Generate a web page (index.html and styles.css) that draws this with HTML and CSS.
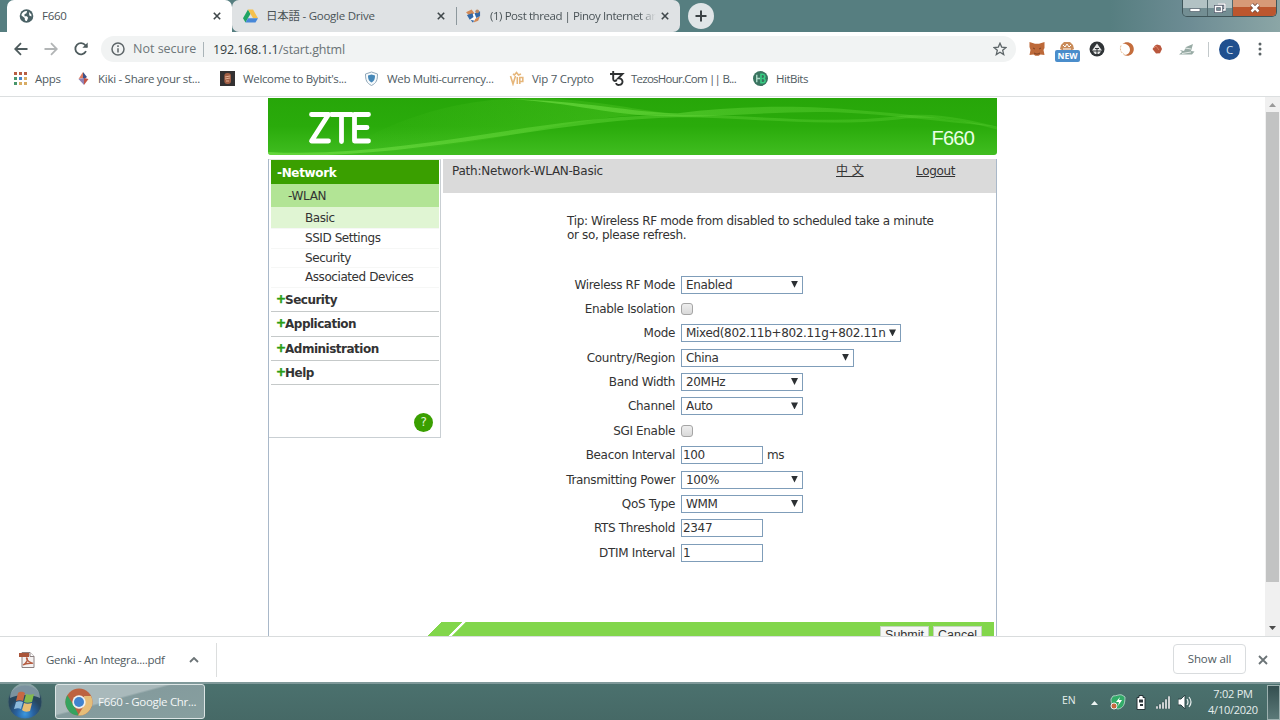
FILE: index.html
```html
<!DOCTYPE html>
<html lang="en">

<head>
    <meta charset="UTF-8">
    <meta name="viewport" content="width=device-width, initial-scale=1.0">
    <title>F660</title>
    <link rel="stylesheet" href="styles.css">
</head>

<body>
    <!-- tabs -->
    <header class="tabstrip">
        <div class="tab active">
            <svg class="favicon" viewBox="0 0 14 14"><circle cx="7" cy="7" r="6.8" fill="#4b6266"/><path d="M2 5.5C3 3 5 1.8 7.6 2L7 4.2 5 5.2v2h2.4l1.2 1.6-1.2 3.2C5 12 5.4 10 5.2 9L2 6.5zM9.5 3l2.4 2.4v2.2L9.8 6.4z" fill="#fff"/></svg>
            <span class="tab-title">F660</span>
            <svg class="close" viewBox="0 0 8 8"><path d="M.8.8l6.4 6.4M7.2.8L.8 7.2"/></svg>
        </div>
        <div class="tab drive">
            <svg class="favicon" viewBox="0 0 16 14"><path d="M5.3 0L0 9.3 2.7 14 8 4.7z" fill="#1fa463"/><path d="M5.3 0h5.4L16 9.3h-5.3z" fill="#f5c04c"/><path d="M5.3 9.3H16L13.3 14H2.7z" fill="#4687d8"/></svg>
            <span class="tab-title">日本語 - Google Drive</span>
            <svg class="close" viewBox="0 0 8 8"><path d="M.8.8l6.4 6.4M7.2.8L.8 7.2"/></svg>
        </div>
        <div class="tab forum">
            <svg class="favicon" viewBox="0 0 16 14"><circle cx="8" cy="8" r="4.5" fill="#fff"/><path d="M0 3l6-3 3 4-5 3zM10 10l5-3-2 5-5 2z" fill="#d18a58"/><path d="M1 6l6-2 1 4-4 3zM9 4l6-2v5l-4 2zM5 11l4 1-2 2z" fill="#3469a7"/><circle cx="12" cy="2" r="2" fill="#ba8964"/></svg>
            <span class="tab-title fade">(1) Post thread | Pinoy Internet ar</span>
            <svg class="close" viewBox="0 0 8 8"><path d="M.8.8l6.4 6.4M7.2.8L.8 7.2"/></svg>
        </div>
        <button class="new-tab"><svg viewBox="0 0 12 12"><path d="M6 .5v11M.5 6h11"/></svg></button>
        <div class="window-buttons">
            <button><svg viewBox="0 0 12 10"><path d="M1 5.5h10v3H1z" fill="#fff" stroke="#53606c" stroke-width=".7"/></svg></button>
            <button class="restore"><svg viewBox="0 0 12 10"><path d="M4 1h7v6H9M1.5 3.5h6v5h-6z" fill="none" stroke="#535a6b" stroke-width="3"/><path d="M4 1h7v6H9M1.5 3.5h6v5h-6z" fill="none" stroke="#fff" stroke-width="1.5"/></svg></button>
            <button class="quit"><svg viewBox="0 0 12 10"><path d="M2.5 1.5l7 7M9.5 1.5l-7 7" stroke="#6e4438" stroke-width="4"/><path d="M2.5 1.5l7 7M9.5 1.5l-7 7" stroke="#fff" stroke-width="2.5"/></svg></button>
        </div>
    </header>

    <!-- address bar -->
    <div class="toolbar">
        <svg class="nav-icon" viewBox="0 0 14 14"><path d="M13.5 7H1.5M7 1.2L1.2 7 7 12.8"/></svg>
        <svg class="nav-icon forward" viewBox="0 0 14 14"><path d="M.5 7h12M7 1.2L12.8 7 7 12.8"/></svg>
        <svg class="nav-icon" viewBox="0 0 14 14"><path d="M12 9.2A5.6 5.6 0 1 1 11.4 3.3L13 5"/><path d="M13.7.5v5.3H8.4z" fill="#4e5b5d" stroke="none"/></svg>
        <div class="address">
            <svg class="info" viewBox="0 0 14 14"><circle cx="7" cy="7" r="6"/><path d="M7 6.2v4.3M7 3.3v1.6"/></svg>
            <span class="insecure">Not secure</span>
            <span class="url">192.168.1.1<i>/start.ghtml</i></span>
            <svg class="star" viewBox="0 0 14 14"><path d="M7 1.2l1.7 3.9 4.2.4-3.2 2.8 1 4.2L7 10.2l-3.7 2.3 1-4.2L1.1 5.5l4.2-.4z"/></svg>
        </div>
        <div class="extensions">
            <svg viewBox="0 0 16 16"><path d="M.5 1L6 2.8h4L15.500 1v6l-1 2 1 5-4-.6-1.800 1.400H6.400L4.500 13.400.5 14l1-5-1-3z" fill="#bd6939"/><path d="M4 7l2 1M12 7l-2 1M5 12l2 1h2l2-1" stroke="#7d4123" fill="none"/></svg>
            <span class="new-ext"><svg viewBox="0 0 16 10"><path d="M1 8l1-4 3-3h6l3 3 1 4-4 2H5z" fill="#c98b59"/><path d="M4 4l2 2 2-3 2 3 2-2M4 8h8" stroke="#fff" fill="none"/></svg><b>NEW</b></span>
            <svg viewBox="0 0 16 16"><circle cx="8" cy="8" r="7.500" fill="#303437"/><path d="M8 2.500l2.800 4L13 9.500H3l2.200-3zM4 10.500h8l-2 2.500H6z" fill="#e4e5e5"/><path d="M6 7.500h4M8 8v5" stroke="#303437"/></svg>
            <svg viewBox="0 0 16 16"><path d="M3.5 2.8C7.5-.8 14.8 1.7 14.8 8c0 5.4-5.2 8.3-10 6 3 .2 6-1.4 6.2-5.2.1-4-3.600-6.600-7.500-6z" fill="#c46d3c"/><path d="M2 4.500C.2 9 2.500 13 7 14" stroke="#e5ba91" fill="none" stroke-dasharray="2 1"/></svg>
            <svg viewBox="0 0 16 16"><path d="M3.500 8L6 4.500l2-.9 3.500 1L13 8l-2 4.200-4 .3z" fill="#b9573d"/><path d="M5 7l2-2 3 4" stroke="#dc8063" fill="none"/></svg>
            <svg viewBox="0 0 16 16"><path d="M0 13.500l3-2.500-2-2 4 1 2-4 7-3-2 7 3.500.5-2.500 3z" fill="#98aba5"/><path d="M6 7l6 1M3 12.500l9-1.500" stroke="#e5ebe8"/></svg>
        </div>
        <span class="divider"></span>
        <span class="avatar">C</span>
        <svg class="menu" viewBox="0 0 4 14"><circle cx="2" cy="2" r="1.5"/><circle cx="2" cy="7" r="1.5"/><circle cx="2" cy="12" r="1.5"/></svg>
    </div>

    <!-- bookmarks -->
    <nav class="bookmarks">
        <a class="apps"><svg viewBox="0 0 13 13"><g fill="#b85e43"><path d="M0 0h3v3H0zM5 0h3v3H5zM10 0h3v3h-3z"/></g><path d="M0 5h3v3H0zM0 10h3v3H0z" fill="#48966b"/><path d="M5 5h3v3H5z" fill="#4583ca"/><path d="M10 5h3v3h-3zM5 10h3v3H5zM10 10h3v3h-3z" fill="#d8ac64"/></svg><span>Apps</span></a>
        <a class="kiki"><svg viewBox="0 0 13 15"><path d="M6 1v6L1.500 8z" fill="#df7b5f"/><path d="M6 1l4 5-4 3z" fill="#3d4f86"/><path d="M1.500 8L7 7v7z" fill="#8f82b4"/><path d="M7 7l4.500 1L7 14z" fill="#c25346"/></svg><span>Kiki - Share your st...</span></a>
        <a class="bybit"><svg viewBox="0 0 15 15"><path d="M0 0h15v15H0z" fill="#343132"/><rect x="4.3" y="2" width="6.7" height="11" rx="3" fill="#a25f45"/><path d="M5 6l5-1M5 8l5-1M6 10h3" stroke="#e4b095"/></svg><span>Welcome to Bybit's...</span></a>
        <a class="web"><svg viewBox="0 0 15 15"><path d="M7.5 1l6 2c0 6-1 9-6 11.5C2.500 12 1.500 9 1.500 3z" fill="#f6fafc" stroke="#91a7b8"/><path d="M7.500 3.500l3.500 1c0 4-1 5.500-3.500 7C5 10 4 8.500 4 4.500z" fill="#4688b8"/></svg><span>Web Multi-currency...</span></a>
        <a class="vip"><svg viewBox="0 0 15 15"><path d="M1.500 5l2.500 8L6.500 5M8.300 6v7M10.800 13V6.500h3v4h-3M4 3l1.500 1L7.500 1.500l2 2.500L12 3" fill="none" stroke="#e6b67a" stroke-width="1.600"/></svg><span>Vip 7 Crypto</span></a>
        <a class="tezos"><svg viewBox="0 0 15 15"><path d="M0 3h6M3.200 0v8c0 2.500 3 2.500 3.400.5M5.500 3h7L8.200 7.400c5-.8 6 6 1 6.500-2 .2-3-.8-3-2" fill="none" stroke="#2f3233" stroke-width="1.900"/></svg><span>TezosHour.Com || B...</span></a>
        <a class="hitbits"><svg viewBox="0 0 16 16"><circle cx="8" cy="8" r="8" fill="#3a7460"/><path d="M4 4v8M4 8h3.500" stroke="#aedbc8" stroke-width="1.500"/><path d="M8.500 3.500v9h2c3.200 0 3-4 .8-4.500 2-.8 1.700-4.500-1-4.500z" fill="none" stroke="#37cf83" stroke-width="1.700"/></svg><span>HitBits</span></a>
    </nav>

    <!-- router page -->
    <div class="viewport">
        <div class="router">
            <div class="banner">
                <svg class="waves" viewBox="0 0 729 56" preserveAspectRatio="none">
                    <defs>
                        <linearGradient id="band" x1="0" x2="1" y1="0" y2="0">
                            <stop offset="0" stop-color="#7be64d" stop-opacity=".6"/>
                            <stop offset=".5" stop-color="#65d73b" stop-opacity=".42"/>
                            <stop offset="1" stop-color="#65d73b" stop-opacity=".25"/>
                        </linearGradient>
                        <linearGradient id="glow" x1="0" x2="1" y1="0" y2="0">
                            <stop offset="0" stop-color="#57cc2a" stop-opacity="0"/>
                            <stop offset="1" stop-color="#57cc2a" stop-opacity=".4"/>
                        </linearGradient>
                    </defs>
                    <path d="M70 55C150 5 220 0 270 0c60 2 100 12 145 17-65-6-140 15-205 25-60 9-90 11-140 13z" fill="url(#glow)"/>
                    <path d="M0 53C130 60 260 20 390 17c100-2 160 10 240 1 40-5 70 4 99 10v3c-40-10-60-14-99-10-80 8-150-2-220-2C290 21 140 62 0 56z" fill="url(#band)"/>
                    <path d="M240 1c80 2 120 13 170 14 60-8 130-8 180-3 50 4 90 8 139 16-60-5-110-12-160-14-60-2-120 6-170 4C340 17 310 5 240 1z" fill="url(#band)"/>
                </svg>
                <svg class="logo" viewBox="0 0 62 32" role="img" aria-label="ZTE"><path d="M3 2.500h17L3 29h17M23 2.500h20M33 2.500v27M60 2.500H46V29h14M46 15.500h12.500"/></svg>
                <span class="model">F660</span>
            </div>
            <div class="main">
                <aside class="sidebar">
                    <a class="item open">-Network</a>
                    <a class="item sub">-WLAN</a>
                    <a class="item leaf current">Basic</a>
                    <a class="item leaf">SSID Settings</a>
                    <a class="item leaf">Security</a>
                    <a class="item leaf">Associated Devices</a>
                    <a class="item group"><b>+</b>Security</a>
                    <a class="item group"><b>+</b>Application</a>
                    <a class="item group"><b>+</b>Administration</a>
                    <a class="item group"><b>+</b>Help</a>
                    <a class="help">?</a>
                </aside>
                <section class="content">
                    <div class="path">
                        <span>Path:Network-WLAN-Basic</span>
                        <a class="lang">中 文</a>
                        <a class="logout">Logout</a>
                    </div>
                    <p class="tip">Tip: Wireless RF mode from disabled to scheduled take a minute<br>or so, please refresh.</p>
                    <form class="settings">
                        <label>Wireless RF Mode</label>
                        <div class="select"><select><option>Enabled</option></select><i></i></div>
                        <label>Enable Isolation</label>
                        <div><input class="check" type="checkbox"></div>
                        <label>Mode</label>
                        <div class="select wide"><select><option>Mixed(802.11b+802.11g+802.11n</option></select><i></i></div>
                        <label>Country/Region</label>
                        <div class="select medium"><select><option>China</option></select><i></i></div>
                        <label>Band Width</label>
                        <div class="select"><select><option>20MHz</option></select><i></i></div>
                        <label>Channel</label>
                        <div class="select"><select><option>Auto</option></select><i></i></div>
                        <label>SGI Enable</label>
                        <div><input class="check" type="checkbox"></div>
                        <label>Beacon Interval</label>
                        <div><input class="field" type="text" value="100"><span class="unit">ms</span></div>
                        <label>Transmitting Power</label>
                        <div class="select"><select><option>100%</option></select><i></i></div>
                        <label>QoS Type</label>
                        <div class="select"><select><option>WMM</option></select><i></i></div>
                        <label>RTS Threshold</label>
                        <div><input class="field" type="text" value="2347"></div>
                        <label>DTIM Interval</label>
                        <div><input class="field" type="text" value="1"></div>
                    </form>
                    <div class="actions">
                        <button>Submit</button>
                        <button>Cancel</button>
                    </div>
                </section>
            </div>
        </div>
        <div class="scrollbar">
            <i class="up"></i>
            <div class="thumb"></div>
            <i class="down"></i>
        </div>
    </div>

    <!-- downloads -->
    <div class="downloads">
        <div class="file">
            <svg class="pdf" viewBox="0 0 16 16"><path d="M3 .5h8l4 4v11H3z" fill="#f4f2f2" stroke="#8c8080"/><path d="M11 .5v4h4" fill="#fff" stroke="#8c8080"/><path d="M0 1h10v4H0z" fill="#aa553a"/><path d="M4 13c4-2 5-6 4-7s-1 3 5 5c3 1-5-1-9 2z" fill="none" stroke="#b65c41" stroke-width="1.300"/></svg>
            <span>Genki - An Integra....pdf</span>
            <svg class="chevron" viewBox="0 0 10 6"><path d="M1 5l4-4 4 4"/></svg>
        </div>
        <button class="show-all">Show all</button>
        <svg class="dismiss" viewBox="0 0 10 10"><path d="M1 1l8 8M9 1L1 9"/></svg>
    </div>

    <!-- taskbar -->
    <footer class="taskbar">
        <div class="start">
            <svg viewBox="0 0 36 36">
                <defs><radialGradient id="orb" cx=".5" cy=".85"><stop offset="0" stop-color="#3b98df"/><stop offset=".5" stop-color="#2862a1"/><stop offset="1" stop-color="#27465e"/></radialGradient></defs>
                <circle cx="18" cy="18" r="17" fill="url(#orb)" stroke="#48696d"/>
                <path d="M3 14A15 15 0 0 1 33 14c-8-4-22-4-30 0z" fill="#c1d2d5" opacity=".55"/>
                <path d="M11 9c3-2 5-1 7 0l-2 8c-2-1-5-1-7 0z" fill="#c76844"/><path d="M19 10c2 1 5 1 8 0l-2 8c-3 1-6 1-8 0z" fill="#82b94f"/>
                <path d="M9 18c2-1 5-1 7 0l-2 7c-2-1-4-1-7 0z" fill="#8cbadd"/><path d="M17 19c2 1 5 1 8 0l-2 8c-3 1-6 1-8-1z" fill="#e8bd72"/>
            </svg>
        </div>
        <div class="task">
            <svg viewBox="0 0 28 28"><circle cx="14" cy="14" r="13.500" fill="#bd6341"/><path d="M2.300 7.200L9 18l5 9.500A13.500 13.500 0 0 1 2.300 7.200z" fill="#35a35f"/><path d="M13 27.500L20 16l-1-8h7A13.500 13.500 0 0 1 13 27.500z" fill="#e6bd78"/><circle cx="14" cy="14" r="6.700" fill="#edf0ef"/><circle cx="14" cy="14" r="5" fill="#4083cf"/></svg>
            <span>F660 - Google Chr...</span>
        </div>
        <div class="tray">
            <span class="kb">EN</span>
            <i class="tray-arrow"></i>
            <svg class="shield" viewBox="0 0 16 16"><path d="M3 2c4 0 6-2 9-1l3 2c0 8-2 11-7 12C3 14 1 10 1 5z" fill="#32ac68" stroke="#a8cec0"/><path d="M10 3L6 8h3l-1 4 4-6H9z" fill="#fff"/><circle cx="4" cy="12" r="3" fill="#c6683e" stroke="#eee"/></svg>
            <svg class="battery" viewBox="0 0 10 15"><path d="M3 .5h4v2h2v12H1v-12h2z" fill="#fff" stroke="#283539"/><path d="M3 4.500h4v3H3zM4 9h3v2H4z" fill="#2c3539"/></svg>
            <svg class="signal" viewBox="0 0 15 13"><path d="M0 13v-3h2v3zM3 13V8h2v5zM6 13V6h2v7zM9 13V3h2v10zM12 13V0h2v13z" fill="#fff" stroke="#354b4e" stroke-width=".5"/></svg>
            <svg class="volume" viewBox="0 0 15 14"><path d="M0 4h3l4-4v14l-4-4H0z" fill="#fff" stroke="#314749"/><path d="M9 4q2 3 0 6M11 2q4 5 0 10" fill="none" stroke="#e9efef" stroke-width="1.200"/></svg>
            <div class="clock"><span>7:02 PM</span><span>4/10/2020</span></div>
            <div class="peek"></div>
        </div>
    </footer>
</body>

</html>
```
FILE: styles.css
```css
:root {
    --teal: #567e80;
    --ui: "Open Sans", "Noto Sans", "Noto Sans CJK JP", sans-serif;
    --page: "DejaVu Sans", "Noto Sans CJK SC", sans-serif;
    --green: #3a9f00;
    --line: #a9b8c9;
}

* {
    box-sizing: border-box;
}

body {
    margin: 0;
    width: 1280px;
    height: 720px;
    overflow: hidden;
    display: flex;
    flex-direction: column;
    background: #fff;
    font-family: var(--ui);
    font-size: 11.5px;
    color: #505b5f;
}

svg {
    display: block;
    flex: none;
}

button {
    font-family: inherit;
    padding: 0;
}

/* tabs */
.tabstrip {
    height: 32px;
    flex: none;
    display: flex;
    padding-left: 7px;
    background: linear-gradient(90deg, var(--teal) 0, var(--teal) 1110px, #6d8c94 1190px, #8ba6a6 100%);
}

.tab {
    display: flex;
    align-items: center;
    height: 32px;
    background: #dfe2e4;
    color: #4a5357;
}

.tab.active {
    width: 225px;
    padding: 0 11px 0 12px;
    background: #fff;
    border-radius: 7px 7px 0 0;
}

.tab.drive {
    width: 224px;
    padding: 0 11px 0 11px;
    border-radius: 7px 0 0 7px;
}

.tab.forum {
    width: 224px;
    padding: 0 11px 0 10px;
    border-radius: 0 7px 7px 0;
    position: relative;
}

.tab.forum::before {
    content: "";
    position: absolute;
    left: 0;
    top: 7px;
    width: 1px;
    height: 18px;
    background: #8d989d;
}

.favicon {
    width: 15px;
    height: 14px;
    margin-right: 8px;
}

.tab-title {
    flex: 1;
    padding-bottom: 2px;
    white-space: nowrap;
    overflow: hidden;
    letter-spacing: -.25px;
}

.tab-title.fade {
    letter-spacing: -.43px;
    margin-left: 1px;
    -webkit-mask-image: linear-gradient(90deg, #000 90%, transparent);
    mask-image: linear-gradient(90deg, #000 90%, transparent);
}

.close {
    width: 8px;
    height: 8px;
    margin-left: 5px;
    stroke: #3f474a;
    stroke-width: 1.6;
}

.new-tab {
    width: 26px;
    height: 26px;
    margin: 3px 0 0 8px;
    border: 0;
    border-radius: 50%;
    background: #e0e5e7;
    display: grid;
    place-items: center;
}

.new-tab svg {
    width: 12px;
    stroke: #3b4245;
    stroke-width: 2;
}

.window-buttons {
    display: flex;
    height: 17px;
    margin: 0 3px 0 auto;
    border: 1px solid #3f5559;
    border-top: 0;
    border-radius: 0 0 5px 5px;
    overflow: hidden;
}

.window-buttons button {
    width: 25px;
    border: 0;
    border-right: 1px solid #51676c;
    background: linear-gradient(#b2c2c4 50%, #738e93 50%);
    display: grid;
    place-items: center;
}

.window-buttons button.quit {
    width: 43px;
    border-right: 0;
    background: linear-gradient(#d79a78 45%, #bc562e 45%);
}

.window-buttons svg {
    width: 12px;
    height: 10px;
}

/* address bar */
.toolbar {
    height: 34px;
    flex: none;
    display: flex;
    align-items: center;
    padding: 0 18px 0 14px;
}

.nav-icon {
    width: 14px;
    height: 14px;
    margin-right: 16px;
    fill: none;
    stroke: #4e5b5d;
    stroke-width: 1.8;
}

.nav-icon.forward {
    stroke: #b2b5b6;
}

.address {
    flex: none;
    width: 915px;
    height: 26px;
    margin-left: -3px;
    padding: 0 9px 0 10px;
    display: flex;
    align-items: center;
    border-radius: 13px;
    background: #f1f3f3;
    font-size: 12.5px;
}

.info {
    width: 14px;
    margin-right: 8px;
    fill: none;
    stroke: #5e6669;
    stroke-width: 1.5;
}

.insecure {
    width: 71px;
    height: 15px;
    line-height: 14px;
    border-right: 1px solid #aab4b8;
    color: #6d7679;
    white-space: nowrap;
}

.url {
    flex: 1;
    margin-left: 9px;
    color: #333d40;
    letter-spacing: -.15px;
}

.url i {
    font-style: normal;
    color: #697275;
}

.star {
    width: 14px;
    fill: none;
    stroke: #5d6568;
    stroke-width: 1.3;
}

.extensions {
    display: flex;
    gap: 14px;
    margin-left: 13px;
}

.extensions > svg {
    width: 16px;
    height: 16px;
}

.new-ext {
    width: 16px;
    height: 16px;
    position: relative;
}

.new-ext svg {
    width: 16px;
    height: 10px;
}

.new-ext b {
    position: absolute;
    left: -4px;
    top: 9px;
    width: 25px;
    height: 12px;
    border-radius: 2px;
    background: #4a8dcb;
    color: #fff;
    font: bold 8.5px/12px "Open Sans", sans-serif;
    text-align: center;
}

.divider {
    width: 1px;
    height: 15px;
    margin-left: auto;
    background: #c3c9cb;
}

.avatar {
    width: 21px;
    height: 21px;
    margin-left: 10px;
    border-radius: 50%;
    background: #20508f;
    color: #d5e1ef;
    line-height: 21px;
    text-align: center;
}

.menu {
    width: 4px;
    height: 14px;
    margin-left: 18px;
    fill: #5a6265;
}

/* bookmarks */
.bookmarks {
    height: 31px;
    flex: none;
    padding: 0 0 6px 14px;
    display: flex;
    align-items: center;
    border-bottom: 1px solid #dcdfe0;
}

.bookmarks a {
    display: flex;
    align-items: center;
    white-space: nowrap;
    letter-spacing: -.28px;
}

.bookmarks svg {
    width: 15px;
    height: 15px;
    margin-right: 8px;
}

.bookmarks .apps {
    width: 63px;
}

.bookmarks .apps svg {
    width: 13px;
    height: 13px;
}

.bookmarks .kiki {
    width: 143px;
}

.bookmarks .kiki svg {
    width: 13px;
}

.bookmarks .bybit {
    width: 144px;
    letter-spacing: -.35px;
}

.bookmarks .web {
    width: 145px;
    letter-spacing: -.35px;
}

.bookmarks .vip {
    width: 101px;
}

.bookmarks .tezos {
    width: 143px;
    letter-spacing: -.75px;
}

.bookmarks .tezos svg {
    margin-right: 6px;
}

.bookmarks .hitbits {
    letter-spacing: -.5px;
}

/* page area */
.viewport {
    height: 540px;
    flex: none;
    display: flex;
    overflow: hidden;
    border-bottom: 1px solid #d9dcdd;
    font-family: var(--page);
    font-size: 12px;
    letter-spacing: -.33px;
    color: #333;
}

.router {
    width: 729px;
    margin-left: 268px;
    padding-top: 1px;
    flex: none;
    height: 600px;
}

.banner {
    height: 57px;
    display: grid;
    border-radius: 0 0 3px 3px;
    background: linear-gradient(#27a609, #2aab0b 50%, #40bd20);
    overflow: hidden;
}

.banner > * {
    grid-area: 1 / 1;
}

.waves {
    width: 729px;
    height: 57px;
}

.logo {
    width: 63px;
    height: 32px;
    margin: 14px 0 0 40px;
    fill: none;
    stroke: #fff;
    stroke-width: 4.8;
    stroke-linecap: round;
    stroke-linejoin: round;
}

.model {
    justify-self: end;
    margin: 29px 23px 0 0;
    color: #e9ffe5;
    font: 20px/23px "Liberation Sans", sans-serif;
    letter-spacing: -.8px;
}

.main {
    height: 535px;
    margin-top: 4px;
    display: flex;
    align-items: flex-start;
    border: 1px solid var(--line);
    border-top: 0;
}

.sidebar {
    width: 172px;
    height: 279px;
    padding: 0 1px 0 2px;
    flex: none;
    border: 1px solid #c9cfd3;
    border-left: 0;
    border-top-color: #e3e7e3;
    display: flex;
    flex-direction: column;
}

.item {
    display: block;
    flex: none;
    height: 19.6px;
    line-height: 19px;
    white-space: nowrap;
}

.item.open {
    height: 24px;
    line-height: 26px;
    padding-left: 6px;
    background: var(--green);
    color: #fff;
    font-weight: bold;
}

.item.sub {
    height: 23px;
    line-height: 25px;
    padding-left: 17px;
    background: #b2e495;
}

.item.leaf {
    padding-left: 34px;
    letter-spacing: -.43px;
    border-bottom: 1px solid #f6f7f6;
}

.item.leaf.current {
    height: 22px;
    line-height: 23px;
    background: #e0f5d3;
}

.item.group {
    height: 24.4px;
    line-height: 25px;
    padding-left: 5px;
    border-bottom: 1px solid #c5c9c9;
    font-weight: bold;
    letter-spacing: -.5px;
}

.item.group b {
    display: inline-block;
    width: 9px;
    line-height: 20px;
    vertical-align: 1px;
    color: #2c9d15;
    -webkit-text-stroke: .5px #2c9d15;
}

.help {
    width: 19px;
    height: 19px;
    margin: 28px 6px 0 auto;
    border-radius: 50%;
    background: var(--green);
    color: #e0f5d3;
    line-height: 19px;
    text-align: center;
}

.content {
    width: 553px;
    margin-left: 2px;
    flex: none;
}

.path {
    height: 34px;
    padding: 5px 0 0 9px;
    display: flex;
    background: #dadada;
    line-height: 15px;
}

.path span {
    width: 384px;
    letter-spacing: -.22px;
}

.path a {
    text-decoration: underline;
    height: 15px;
}

.path .lang {
    width: 80px;
    letter-spacing: 0;
}

.tip {
    margin: 21px 0 30.5px 124px;
    line-height: 14px;
    white-space: nowrap;
}

.settings {
    margin: 0;
    display: grid;
    grid-template-columns: 232px 1fr;
    column-gap: 6px;
    grid-auto-rows: 24.36px;
    align-items: center;
}

.settings label {
    text-align: right;
}

.settings > div {
    display: flex;
    align-items: center;
}

.settings .select {
    display: grid;
    width: 122px;
    height: 18px;
    align-items: center;
}

.settings .select.wide {
    width: 220px;
}

.settings .select.medium {
    width: 173px;
}

.select > * {
    grid-area: 1 / 1;
}

.select select {
    appearance: none;
    width: 100%;
    height: 18px;
    padding: 0 4px;
    border: 1px solid #7f9db9;
    border-radius: 0;
    background: #fff;
    font: inherit;
    letter-spacing: inherit;
    color: inherit;
}

.select i {
    width: 7px;
    height: 7px;
    margin: 0 5px 1px auto;
    background: #2c3033;
    clip-path: polygon(0 0, 100% 0, 50% 100%);
}

.check {
    appearance: none;
    width: 12px;
    height: 12px;
    margin: 0;
    border: 1px solid #a5a5a5;
    border-radius: 3px;
    background: linear-gradient(#eee, #d9d9d9);
}

.field {
    width: 82px;
    height: 18px;
    padding: 0 1px;
    border: 1px solid #7f9db9;
    font: inherit;
    letter-spacing: inherit;
    color: inherit;
}

.unit {
    margin-left: 4px;
}

.actions {
    height: 22px;
    margin: 57px 2px 0 -15px;
    padding: 4px 12px 0 0;
    display: flex;
    justify-content: flex-end;
    gap: 4px;
    background: linear-gradient(135deg, transparent 9.2px, #82d64b 9.8px, #82d64b 24px, #fff 24.5px, #fff 26.5px, #82d64b 27px);
}

.actions button {
    height: 19px;
    width: 49px;
    border: 1px solid #c5d3c0;
    background: #f5f6f5;
    font: 12.5px/14px "Liberation Sans", sans-serif;
    color: #333;
}

.scrollbar {
    width: 15px;
    margin-left: auto;
    display: flex;
    flex-direction: column;
    align-items: center;
    background: #f0f0f0;
}

.scrollbar .up,
.scrollbar .down {
    width: 7px;
    height: 4px;
    margin: 6px 0 5px;
    background: #999;
    clip-path: polygon(50% 0, 100% 100%, 0 100%);
}

.scrollbar .down {
    margin: auto 0 6px;
    background: #4c4c4c;
    clip-path: polygon(0 0, 100% 0, 50% 100%);
}

.thumb {
    width: 13px;
    height: 470px;
    background: #c2c3c3;
}

/* downloads */
.downloads {
    height: 45px;
    flex: none;
    display: flex;
    align-items: center;
    padding-right: 12px;
}

.file {
    width: 217px;
    height: 34px;
    padding: 0 17px 0 19px;
    display: flex;
    align-items: center;
    border-right: 1px solid #dcdede;
    letter-spacing: -.3px;
}

.pdf {
    width: 16px;
    height: 16px;
    margin-right: 11px;
}

.chevron {
    width: 10px;
    margin-left: auto;
    fill: none;
    stroke: #6b7376;
    stroke-width: 1.8;
}

.show-all {
    width: 73px;
    height: 30px;
    margin: -2px 0 0 auto;
    border: 1px solid #d9dcde;
    border-radius: 4px;
    background: #fff;
    color: #505b5f;
    font-size: 11.5px;
    letter-spacing: -.1px;
}

.dismiss {
    width: 10px;
    margin-left: 12px;
    stroke: #6b7376;
    stroke-width: 1.8;
}

/* taskbar */
.taskbar {
    height: 38px;
    flex: none;
    display: flex;
    border-top: 2px solid #80999a;
    background: linear-gradient(#4b716e, #466966);
    color: #e6eeed;
}

.start {
    width: 55px;
    padding-left: 7px;
}

.start svg {
    width: 36px;
    height: 36px;
}

.task {
    width: 150px;
    height: 35px;
    padding-left: 9px;
    display: flex;
    align-items: center;
    gap: 5px;
    border: 1px solid #dce5e5;
    border-radius: 3px;
    background: linear-gradient(165deg, #a9b9bb 40%, #849b9d 43%, #879f9f);
    color: #f4f7f7;
    white-space: nowrap;
    letter-spacing: -.3px;
}

.task svg {
    width: 28px;
    height: 28px;
}

.tray {
    margin-left: auto;
    display: flex;
    align-items: center;
}

.kb {
    width: 29px;
    margin-bottom: 5px;
    font-size: 10.5px;
}

.tray-arrow {
    width: 7px;
    height: 4px;
    margin: 2px 12px 0 0;
    background: #eef5f4;
    clip-path: polygon(50% 0, 100% 100%, 0 100%);
}

.shield {
    width: 16px;
    height: 16px;
}

.battery {
    width: 10px;
    height: 15px;
    margin-left: 10px;
}

.signal {
    width: 15px;
    height: 13px;
    margin-left: 10px;
}

.volume {
    width: 15px;
    height: 14px;
    margin-left: 7px;
}

.clock {
    width: 68px;
    height: 36px;
    margin-left: 6px;
    display: flex;
    flex-direction: column;
    justify-content: center;
    text-align: center;
    line-height: 16px;
    font-size: 11px;
    letter-spacing: -.25px;
}

.peek {
    width: 13px;
    height: 35px;
    border: 1px solid #9db1b0;
    background: linear-gradient(#344f50, #5b7978);
}
```
